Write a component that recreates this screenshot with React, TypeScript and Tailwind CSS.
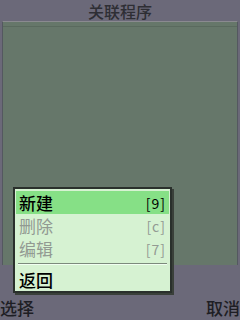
import React from 'react';

const font = { fontFamily: '"Noto Sans CJK SC", "Noto Sans", sans-serif' };

function MenuRow({ label, keyHint, active, disabled }: { label: string; keyHint: string; active?: boolean; disabled?: boolean }) {
  return (
    <div
      className={`flex items-center justify-between h-[23px] px-[3px] text-[17px] leading-none ${
        active ? 'bg-[#86e086] text-black font-medium' : disabled ? 'text-[#929a92]' : 'text-black font-medium'
      }`}
    >
      <span>{label}</span>
      <span className="text-[14px] tracking-[1px] font-normal">{keyHint}</span>
    </div>
  );
}

export default function App() {
  return (
    <div className="relative w-[240px] h-[320px] bg-[#6b6979] overflow-hidden" style={font}>
      <div className="h-[21px] pt-[1px] flex items-center justify-center text-[16px] leading-[18px] text-[#2e2e34] font-medium">关联程序</div>
      <div className="mx-[2px] h-[244px] border-t border-[#8a8a90] border-x border-x-[#545860] bg-[#66776a]">
        <div className="h-[5px] border-b border-[#5a6a5e]" />
      </div>
      <div className="flex justify-between items-end h-[55px] pb-[4px] text-[17px] leading-none text-[#1e1e24] font-medium">
        <span>选择</span>
        <span>取消</span>
      </div>

      <div className="absolute left-[13px] top-[187px] w-[159px] h-[106px] bg-[#d6f2d2] border-2 border-[#2a302c] shadow-[2px_2px_0_#3a403a] pt-[2px] px-[1px]">
        <MenuRow label="新建" keyHint="[9]" active />
        <MenuRow label="删除" keyHint="[c]" disabled />
        <MenuRow label="编辑" keyHint="[7]" disabled />
        <div className="mx-[2px] my-[3px] h-[2px] border-t border-[#7c8a7c] bg-[#f0fff0]" />
        <MenuRow label="返回" keyHint="" />
      </div>
    </div>
  );
}
